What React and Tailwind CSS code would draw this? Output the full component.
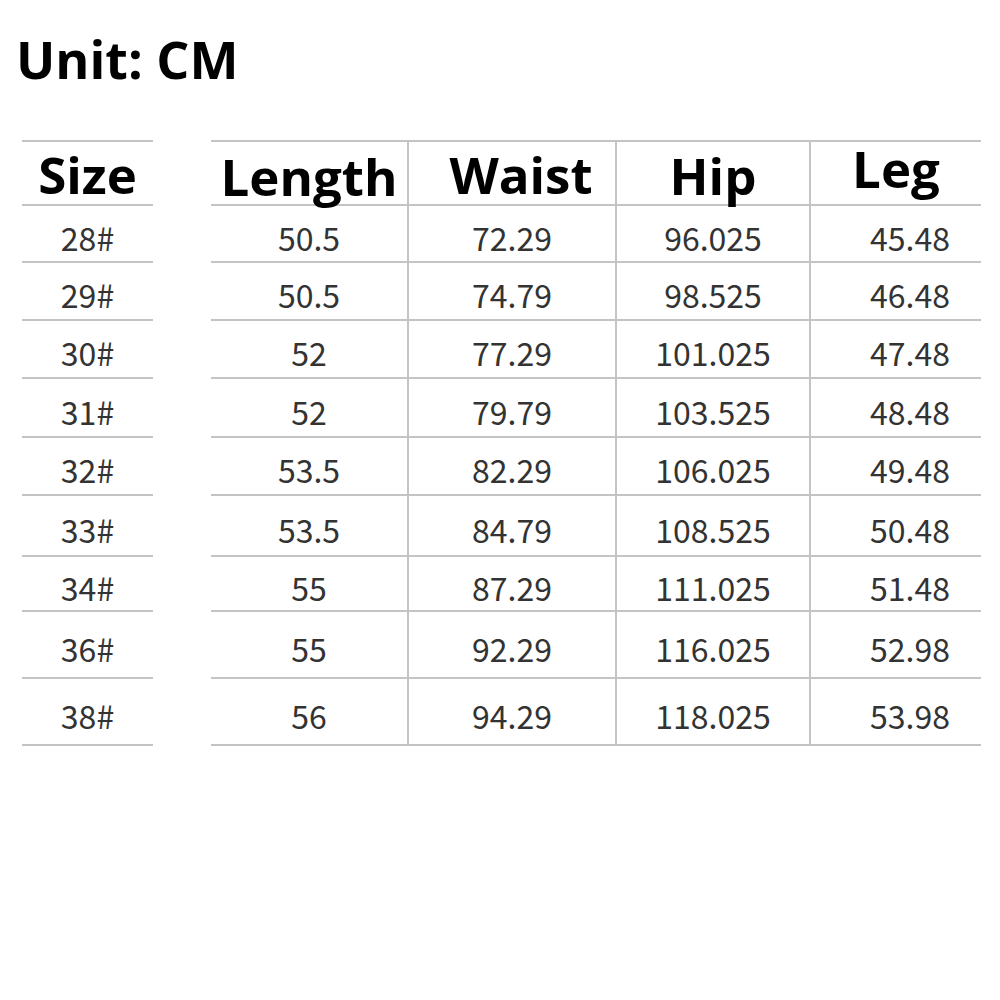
const rows = [
  ['28#', '50.5', '72.29', '96.025', '45.48', 57],
  ['29#', '50.5', '74.79', '98.525', '46.48', 58],
  ['30#', '52', '77.29', '101.025', '47.48', 58],
  ['31#', '52', '79.79', '103.525', '48.48', 59],
  ['32#', '53.5', '82.29', '106.025', '49.48', 58],
  ['33#', '53.5', '84.79', '108.525', '50.48', 61],
  ['34#', '55', '87.29', '111.025', '51.48', 55],
  ['36#', '55', '92.29', '116.025', '52.98', 67],
  ['38#', '56', '94.29', '118.025', '53.98', 67],
];

const heading = "font-['Open_Sans',sans-serif] font-bold text-black text-[51px] leading-none";
const body = "font-['Noto_Sans_CJK_SC',sans-serif] text-[#333] text-[32px] leading-none";
const line = 'border-[#c4c4c4]';

export default function App() {
  return (
    <div className="w-[1000px] h-[1000px] bg-white">
      <div className="pl-[16px] pt-[33px] h-[140px]">
        <h1 className="font-['Open_Sans',sans-serif] font-bold text-black text-[52px] leading-none">Unit: CM</h1>
      </div>

      <div className="pl-[22px]">
        {/* header */}
        <div className={`flex h-[66px] ${heading}`}>
          <div className={`w-[131px] border-y-2 ${line} flex items-center justify-center pt-[2px]`}>Size</div>
          <div className="w-[58px]" />
          <div className={`w-[198px] border-y-2 border-r-2 ${line} flex items-center justify-center pt-[6px]`}>Length</div>
          <div className={`w-[208px] border-y-2 border-r-2 ${line} flex items-center justify-center pl-[18px] pt-[2px]`}>Waist</div>
          <div className={`w-[194px] border-y-2 border-r-2 ${line} flex items-center justify-center pt-[4px]`}>Hip</div>
          <div className={`w-[170px] border-y-2 ${line} flex items-center justify-center pb-[10px]`}>Leg</div>
        </div>

        {rows.map(([size, len, waist, hip, leg, h]) => (
          <div key={size} className={`flex ${body}`} style={{ height: h }}>
            <div className={`w-[131px] border-b-2 ${line} flex items-center justify-center pt-[6px]`}>{size}</div>
            <div className="w-[58px]" />
            <div className={`w-[198px] border-b-2 border-r-2 ${line} flex items-center justify-center pt-[6px]`}>{len}</div>
            <div className={`w-[208px] border-b-2 border-r-2 ${line} flex items-center justify-center pt-[6px]`}>{waist}</div>
            <div className={`w-[194px] border-b-2 border-r-2 ${line} flex items-center justify-center pt-[6px]`}>{hip}</div>
            <div className={`w-[170px] border-b-2 ${line} flex items-center justify-center pl-[28px] pt-[6px]`}>{leg}</div>
          </div>
        ))}
      </div>
    </div>
  );
}
